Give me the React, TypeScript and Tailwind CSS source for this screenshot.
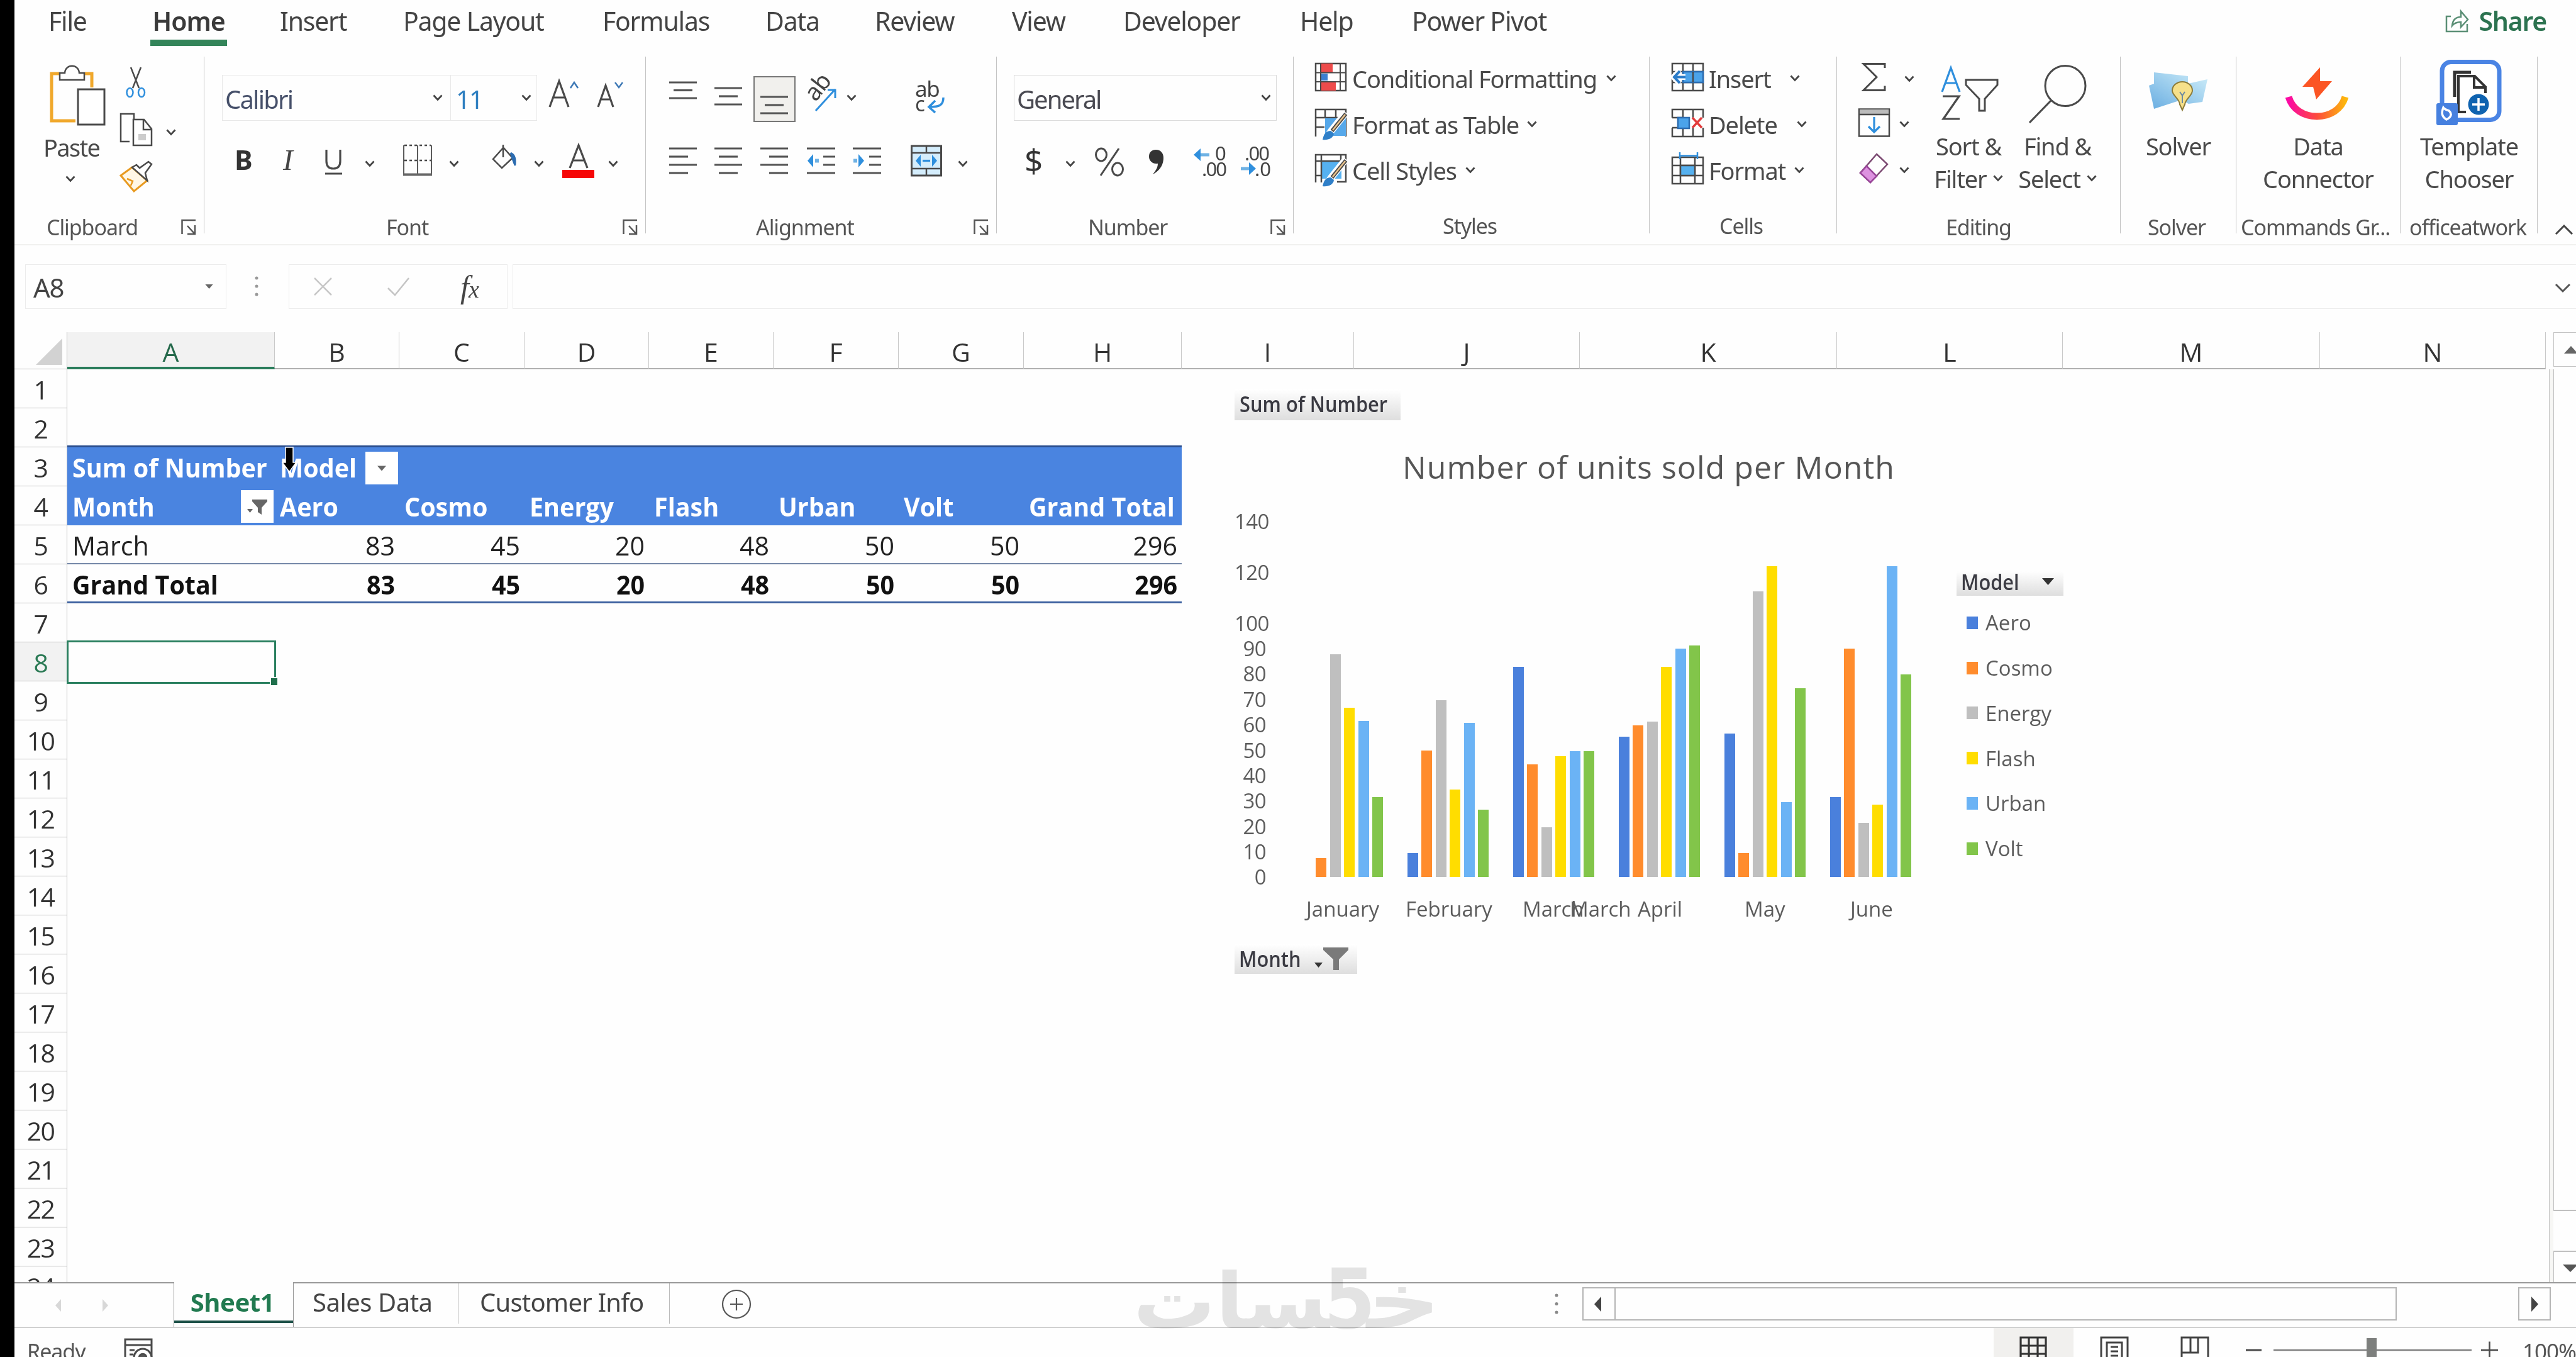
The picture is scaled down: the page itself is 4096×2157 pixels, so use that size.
import type { ReactNode } from "react";
import clsx from "clsx";

const INK = "#4a4a4a";
const BLUE = "#2f8fdd";

const tabs = [
  { label: "File", w: "w-[162px]" },
  { label: "Home", w: "w-[206px]", active: true },
  { label: "Insert", w: "w-[196px]" },
  { label: "Page Layout", w: "w-[317px]" },
  { label: "Formulas", w: "w-[259px]" },
  { label: "Data", w: "w-[174px]" },
  { label: "Review", w: "w-[218px]" },
  { label: "View", w: "w-[177px]" },
  { label: "Developer", w: "w-[281px]" },
  { label: "Help", w: "w-[178px]" },
  { label: "Power Pivot", w: "w-[260px]" },
];

const columns = [
  { id: "A", w: "w-[330px]" },
  { id: "B", w: "w-[198px]" },
  { id: "C", w: "w-[199px]" },
  { id: "D", w: "w-[198px]" },
  { id: "E", w: "w-[198px]" },
  { id: "F", w: "w-[199px]" },
  { id: "G", w: "w-[199px]" },
  { id: "H", w: "w-[251px]" },
  { id: "I", w: "w-[274px]" },
  { id: "J", w: "w-[359px]" },
  { id: "K", w: "w-[409px]" },
  { id: "L", w: "w-[359px]" },
  { id: "M", w: "w-[409px]" },
  { id: "N", w: "w-[359px]" },
];

const rows: Record<number, string[]> = {
  3: ["Sum of Number", "Model"],
  4: ["Month", "Aero", "Cosmo", "Energy", "Flash", "Urban", "Volt", "Grand Total"],
  5: ["March", "83", "45", "20", "48", "50", "50", "296"],
  6: ["Grand Total", "83", "45", "20", "48", "50", "50", "296"],
};

const series = [
  { name: "Aero", color: "bg-[#4a80dc]" },
  { name: "Cosmo", color: "bg-[#ff8c2d]" },
  { name: "Energy", color: "bg-[#bfbfbf]" },
  { name: "Flash", color: "bg-[#ffdd00]" },
  { name: "Urban", color: "bg-[#6bb3f5]" },
  { name: "Volt", color: "bg-[#82c54a]" },
];

const months = [
  [0, 7.5, 88, 67, 61.7, 31.7],
  [9.5, 50, 69.8, 34.5, 61, 26.5],
  [83, 44.5, 19.6, 47.7, 49.8, 49.8],
  [55.6, 60, 61.4, 83, 90.3, 91.6],
  [56.6, 9.5, 113, 123, 29.6, 74.7],
  [31.7, 90.3, 21.5, 28.7, 123, 80.2],
];

const PX_PER_UNIT = 4.02;

// Every icon is drawn in window coordinates; box = [x, y, width, height]
function Glyph({ box, children, className }: { box: number[]; children: ReactNode; className?: string }) {
  return (
    <svg
      width={box[2]}
      height={box[3]}
      viewBox={box.join(" ")}
      fill="none"
      stroke={INK}
      strokeWidth={2.5}
      className={clsx("shrink-0 overflow-visible", className)}
    >
      {children}
    </svg>
  );
}

function Chevron({ className }: { className?: string }) {
  return (
    <svg width="16" height="11" viewBox="0 0 16 11" fill="none" stroke="#444" strokeWidth="2.8" className={clsx("shrink-0", className)}>
      <path d="M1.5 1.5 8 8.5 14.5 1.5" />
    </svg>
  );
}

function Lines({ x, ys, w = 44, short = 30, align }: { x: number; ys: number[]; w?: number; short?: number; align: string }) {
  return (
    <>
      {ys.map((y, i) => {
        const len = i % 2 ? short : w;
        const off = align === "left" ? 0 : align === "right" ? w - len : (w - len) / 2;
        return <path key={y} d={`M${x + off} ${y}h${len}`} strokeWidth={3.2} stroke="#555" />;
      })}
    </>
  );
}

function Launcher() {
  return (
    <svg width="25" height="26" viewBox="0 0 25 26" fill="none" stroke="#555" strokeWidth="2.5" className="ml-auto mr-[11px] shrink-0">
      <path d="M1.5 24V2H23M10 11l11 12M22 10v14H10" />
    </svg>
  );
}

function Group({ w, label, pad, launcher, children }: { w: string; label: string; pad: string; launcher?: boolean; children: ReactNode }) {
  return (
    <section className={clsx("h-[281px] shrink-0 border-r border-[#c4c4c4]", w)}>
      <div className="h-[248px]">{children}</div>
      <div className={clsx("flex h-[46px] items-center whitespace-nowrap text-[34px] leading-[46px] tracking-[-0.032em] text-[#555]", pad)}>
        {label}
        {launcher && <Launcher />}
      </div>
    </section>
  );
}

function BigButton({ w, icon, lines, chevron }: { w: string; icon: ReactNode; lines: string[]; chevron?: boolean }) {
  return (
    <div className={clsx("flex shrink-0 flex-col items-center pt-[5px]", w)}>
      {icon}
      <div className="mt-[6px] whitespace-nowrap text-center text-[38px] leading-[52px] tracking-[-0.03em] text-[#4a4a4a]">
        {lines.map((l, i) => (
          <div key={l} className="flex items-center justify-center">
            {l}
            {chevron && i === lines.length - 1 && <Chevron className="-mt-0.5 ml-2.5" />}
          </div>
        ))}
      </div>
    </div>
  );
}

function ClipboardGroup() {
  return (
    <Group w="w-[302px]" label="Clipboard" pad="pl-[51px]" launcher>
      <div className="flex">
        <div className="w-[167px] pl-[46px]">
          <Glyph box={[78, 103, 90, 98]} className="ml-[10px] mt-[13px]">
            <path d="M93 117H81v75h38M134 117h11v22" stroke="#f0a82c" strokeWidth={5} />
            <path d="M94 127V116h8c1-15 22-15 23 0h8v11z" fill="#fff" />
            <rect x="123" y="142" width="42" height="56" fill="#fff" strokeWidth={3} />
          </Glyph>
          <div className="mt-[8px] text-[38px] leading-[50px] tracking-[-0.045em] text-[#4a4a4a]">Paste</div>
          <Chevron className="ml-[35px] mt-5" />
        </div>
        <div>
          <Glyph box={[200, 106, 32, 50]} className="ml-2.5 mt-4">
            <path d="M208 107l13 33M224 107l-13 33" />
            <ellipse cx="206.500" cy="147" rx="5" ry="7" stroke={BLUE} />
            <ellipse cx="225" cy="147" rx="5" ry="7" stroke={BLUE} />
          </Glyph>
          <div className="mt-[23px] flex items-center">
            <Glyph box={[189, 179, 54, 54]}>
              <path d="M205 225h-14v-44h21v8" />
              <path d="M211 190h17l12 15v26h-29zM227 190v16h13" fill="#fff" />
              <rect x="219" y="213" width="12" height="10" fill="#ccc" stroke="none" />
            </Glyph>
            <Chevron className="ml-5 mt-2" />
          </div>
          <Glyph box={[190, 256, 53, 50]} className="mt-[23px]">
            <path d="M192 279l18-13 24 21-21 17z" fill="#fff7e6" stroke="#e89a20" strokeWidth={3} />
            <path d="M202 284l9 4-3 7" stroke="#e89a20" />
            <path d="M210 266l7-4 5 5 14-10 5 4-10 14 3 12z" fill="#fff" />
          </Glyph>
        </div>
      </div>
    </Group>
  );
}

function FontGroup() {
  return (
    <Group w="w-[702px]" label="Font" pad="pl-[289px]" launcher>
      <div className="pl-[28px] pt-[29px]">
        <div className="flex h-[73px] items-center text-[40px] tracking-[-0.045em] text-[#4a4a4a]">
          <div className="flex h-full w-[364px] items-center border border-[#e8e8e8] pl-1">
            <span className="mt-1 text-[#46506a]">Calibri</span>
            <Chevron className="ml-auto mr-3" />
          </div>
          <div className="flex h-full w-[137px] items-center border border-l-0 border-[#e8e8e8] pl-2">
            <span className="mt-1 text-[#2f7fc0]">11</span>
            <Chevron className="ml-auto mr-2" />
          </div>
          <Glyph box={[872, 119, 50, 73]} className="ml-[18px]">
            <path d="M874 170l15-41 15 41M879 155h20" strokeWidth={3.2} />
            <path d="M907 140l6-9 6 9" stroke="#3d78b5" />
          </Glyph>
          <Glyph box={[948, 119, 44, 73]} className="ml-[26px]">
            <path d="M951 170l12-34 12 34M955 158h16" strokeWidth={3.2} />
            <path d="M978 131l6 8 6-8" stroke="#3d78b5" />
          </Glyph>
        </div>
        <div className="mt-[29px] flex h-[73px] items-center">
          <Glyph box={[372, 221, 30, 73]} className="ml-[19px]">
            <text x="373" y="270" fontSize="43" fontWeight="700" fill="#333" stroke="none">B</text>
          </Glyph>
          <Glyph box={[446, 221, 26, 73]} className="ml-11">
            <text x="450" y="270" fontSize="47" fontStyle="italic" fill="#444" stroke="none" className="font-[Liberation_Serif]">I</text>
          </Glyph>
          <Glyph box={[515, 221, 32, 73]} className="ml-[43px]">
            <path d="M519 238v18q0 12 11 12t11-12v-18" strokeWidth={3.2} />
            <path d="M517 276h27" strokeWidth={3} />
          </Glyph>
          <Chevron className="ml-[33px] mt-1.5" />
          <Glyph box={[640, 221, 48, 73]} className="ml-11">
            <path d="M643 231h42M643 255h42" strokeDasharray="4 4" />
            <path d="M642 231v47M686 231v47M664 231v47" strokeWidth={1.8} />
            <path d="M641 277.500h46" strokeWidth={4} stroke="#666" />
          </Glyph>
          <Chevron className="ml-[26px] mt-1.5" />
          <Glyph box={[780, 221, 42, 73]} className="ml-[50px]">
            <path d="M800 235l-16 18 14 14 17-16-16-18M800 230v20" />
            <path d="M812 243c7 3 8 10 7 20-3-7-5-12-7-20" fill="#2c6cb0" stroke="#2c6cb0" />
          </Glyph>
          <Chevron className="ml-[27px] mt-1.5" />
          <Glyph box={[893, 221, 53, 73]} className="ml-7">
            <path d="M906 267l14-36 14 36M911 255h18" strokeWidth={3.2} />
            <rect x="894" y="270" width="51" height="13" fill="#f60606" stroke="none" />
          </Glyph>
          <Chevron className="ml-[21px] mt-1.5" />
        </div>
      </div>
    </Group>
  );
}

function AlignmentGroup() {
  const ys = [236, 249, 262, 275];
  return (
    <Group w="w-[558px]" label="Alignment" pad="pl-[175px]" launcher>
      <div className="pl-[37px] pt-[29px]">
        <div className="flex h-[73px] items-center">
          <Glyph box={[1064, 119, 45, 73]}>
            <Lines x={1064} ys={[131, 143.5, 156]} align="center" />
          </Glyph>
          <Glyph box={[1136, 119, 45, 73]} className="ml-[27px]">
            <Lines x={1136} ys={[140, 153, 166]} align="center" />
          </Glyph>
          <div className="ml-[17px] mt-1 flex h-[73px] w-[67px] items-center justify-center border-2 border-[#777] bg-[#f1f0ed]">
            <Glyph box={[1210, 120, 45, 73]}>
              <Lines x={1210} ys={[153, 166, 179]} align="center" />
            </Glyph>
          </div>
          <Glyph box={[1280, 119, 52, 73]} className="ml-[15px]">
            <text x="0" y="0" fontSize="38" fill="#444" stroke="none" transform="translate(1297 163) rotate(-52)" className="tracking-[-0.03em]">ab</text>
            <path d="M1297 176l31-34M1316 143h12v13" stroke={BLUE} strokeWidth={3} />
          </Glyph>
          <Chevron className="ml-[14px]" />
          <Glyph box={[1454, 119, 50, 73]} className="ml-[93px]">
            <text x="1454" y="154" fontSize="35" fill="#444" stroke="none" className="tracking-[-0.04em]">ab</text>
            <text x="1454" y="177" fontSize="33" fill="#444" stroke="none">c</text>
            <path d="M1499 155c0 12-6 15-22 15M1486 160l-10 10 10 9" stroke={BLUE} strokeWidth={3.5} />
          </Glyph>
        </div>
        <div className="mt-[29px] flex h-[73px] items-center">
          <Glyph box={[1064, 221, 45, 73]}>
            <Lines x={1064} ys={ys} align="left" />
          </Glyph>
          <Glyph box={[1136, 221, 45, 73]} className="ml-[27px]">
            <Lines x={1136} ys={ys} align="center" />
          </Glyph>
          <Glyph box={[1208, 221, 46, 73]} className="ml-[27px]">
            <Lines x={1209} ys={ys} align="right" />
          </Glyph>
          <Glyph box={[1282, 221, 47, 73]} className="ml-7">
            <path d="M1283 236h45M1309 249h19M1309 262h19M1283 275h45" stroke="#555" strokeWidth={3.2} />
            <path d="M1302 255.500h-6" stroke="#6fb2e4" strokeWidth={6} />
            <path d="M1293 245v21l-9-10.500z" fill={BLUE} stroke="none" />
          </Glyph>
          <Glyph box={[1355, 221, 47, 73]} className="ml-[26px]">
            <path d="M1356 236h45M1382 249h19M1382 262h19M1356 275h45" stroke="#555" strokeWidth={3.2} />
            <path d="M1357 255.500h6" stroke="#6fb2e4" strokeWidth={6} />
            <path d="M1365 245v21l9-10.500z" fill={BLUE} stroke="none" />
          </Glyph>
          <Glyph box={[1447, 221, 52, 73]} className="ml-[45px]">
            <rect x="1449.500" y="232" width="47" height="47" fill="#d4edfc" strokeWidth={3} />
            <path d="M1473 232v11M1473 268v11M1450 243h46M1450 268h46" />
            <path d="M1467 255.500h12" stroke={BLUE} strokeWidth={3.2} />
            <path d="M1464 246v19l-8-9.500zM1482 246v19l8-9.500z" fill={BLUE} stroke="none" />
          </Glyph>
          <Chevron className="ml-6 mt-1.5" />
        </div>
      </div>
    </Group>
  );
}

function NumberGroup() {
  return (
    <Group w="w-[472px]" label="Number" pad="pl-[145px]" launcher>
      <div className="pl-[27px] pt-[29px]">
        <div className="flex h-[73px] w-[418px] items-center border border-[#dcdcdc] pl-1 text-[40px] tracking-[-0.05em] text-[#4a4a52]">
          <span className="mt-1">General</span>
          <Chevron className="ml-auto mr-2" />
        </div>
        <div className="mt-[29px] flex h-[73px] items-center">
          <Glyph box={[1628, 221, 30, 73]} className="ml-4">
            <text x="1629" y="275" fontSize="51" fill="#333" stroke="none">$</text>
          </Glyph>
          <Chevron className="ml-9 mt-1.5" />
          <Glyph box={[1740, 221, 50, 73]} className="ml-[30px]">
            <ellipse cx="1751" cy="246" rx="8.500" ry="10" strokeWidth={3} />
            <ellipse cx="1777" cy="269" rx="8.500" ry="10" strokeWidth={3} />
            <path d="M1779 236l-29 43" strokeWidth={3} />
          </Glyph>
          <Glyph box={[1824, 221, 30, 73]} className="ml-[34px]">
            <path d="M1838 238c8 0 12 6 12 13 0 12-7 21-17 26 5-6 8-11 8-17-8 1-14-4-14-11s4-11 11-11z" fill="#333" stroke="none" />
          </Glyph>
          <Glyph box={[1895, 221, 56, 73]} className="ml-[41px]">
            <text x="1932" y="255" fontSize="31" fill="#444" stroke="none">0</text>
            <text x="1911" y="280" fontSize="31" fill="#444" stroke="none" className="tracking-[-0.06em]">.00</text>
            <path d="M1923 246h-14" stroke="#6fb2e4" strokeWidth={5} />
            <path d="M1909 236v20l-11-10z" fill={BLUE} stroke="none" />
          </Glyph>
          <Glyph box={[1969, 221, 54, 73]} className="ml-[18px]">
            <text x="1979" y="255" fontSize="31" fill="#444" stroke="none" className="tracking-[-0.06em]">.00</text>
            <text x="1995" y="280" fontSize="31" fill="#444" stroke="none">.0</text>
            <path d="M1973 268h13" stroke="#6fb2e4" strokeWidth={5} />
            <path d="M1986 258v20l11-10z" fill={BLUE} stroke="none" />
          </Glyph>
        </div>
      </div>
    </Group>
  );
}

function MenuRow({ icon, label, gap }: { icon: ReactNode; label: string; gap: string }) {
  return (
    <div className="flex h-[73px] items-center whitespace-nowrap text-[38px] tracking-[-0.03em] text-[#4a4a4a]">
      {icon}
      <span className="mt-0.5">{label}</span>
      <Chevron className={gap} />
    </div>
  );
}

function Brush({ y }: { y: number }) {
  return (
    <>
      <path d={`M2140 ${y}l-24 30-9 14`} stroke="#fff" strokeWidth={11} />
      <path d={`M2140 ${y + 2}l-22 27`} stroke={INK} strokeWidth={6} />
      <path d={`M2139 ${y + 3}l-20 25`} stroke="#ecc48c" strokeWidth={2.5} />
      <path d={`M2116 ${y + 29}c-8 0-11 5-13 14 9 1 17-2 18-10z`} fill="#2f7fc8" stroke="none" />
    </>
  );
}

function StylesGroup() {
  return (
    <Group w="w-[566px]" label="Styles" pad="pl-[237px]">
      <div className="-mt-0.5 pl-[33px]">
        <MenuRow
          label="Conditional Formatting"
          gap="ml-[15px]"
          icon={
            <Glyph box={[2090, 88, 53, 73]} className="mr-[7px]">
              <rect x="2092" y="101" width="48" height="43" fill="#fff" />
              <rect x="2100" y="101" width="19" height="14" fill="#ee4b4b" stroke="none" />
              <rect x="2100" y="130" width="24" height="14" fill="#ee4b4b" stroke="none" />
              <rect x="2100" y="117" width="11" height="11" fill="#3c7fd0" stroke="none" />
              <path d="M2092 115.500h48M2092 130h48M2100 101v43M2131 101v43" strokeWidth={2} />
            </Glyph>
          }
        />
        <MenuRow
          label="Format as Table"
          gap="ml-[13px]"
          icon={
            <Glyph box={[2090, 161, 53, 73]} className="mr-[7px]">
              <path d="M2092 217v-43h48v43M2092 187h48M2092 202h14M2107 174v13M2124 174v13" />
              <rect x="2107" y="188" width="33" height="28" fill="#56a8ea" stroke="none" />
              <Brush y={179} />
            </Glyph>
          }
        />
        <MenuRow
          label="Cell Styles"
          gap="ml-[14px]"
          icon={
            <Glyph box={[2090, 234, 53, 73]} className="mr-[7px]">
              <rect x="2101" y="257" width="32" height="27" fill="#56b1f0" stroke="none" />
              <path d="M2092 290v-44h48v43h-14M2092 256h48M2101 246v44M2092 279h9M2132 246v10" />
              <Brush y={253} />
            </Glyph>
          }
        />
      </div>
    </Group>
  );
}

function CellsGroup() {
  return (
    <Group w="w-[298px]" label="Cells" pad="pl-[111px]">
      <div className="-mt-0.5 pl-[34px]">
        <MenuRow
          label="Insert"
          gap="ml-[30px]"
          icon={
            <Glyph box={[2657, 88, 53, 73]} className="mr-[7px]">
              <path d="M2659 101h49v43h-49zM2676 101v43M2692 101v43M2659 114h49M2659 131h49" />
              <rect x="2676" y="114" width="32" height="17" fill="#4ba3ea" stroke="#2c6cb0" />
              <path d="M2692 114v17" />
              <path d="M2680 122.500h-18M2671 112l-10 10.500 10 10.500" stroke="#fff" strokeWidth={9} />
              <path d="M2680 122.500h-18M2671 113l-9 9.500 9 9.500" stroke="#2c7cc8" strokeWidth={4} />
            </Glyph>
          }
        />
        <MenuRow
          label="Delete"
          gap="ml-[31px]"
          icon={
            <Glyph box={[2657, 161, 53, 73]} className="mr-[7px]">
              <path d="M2659 187v-13h49v13M2659 203v14h49v-14M2676 174v13M2692 174v13M2676 203v14M2692 203v14M2659 187h17M2659 203h17" />
              <rect x="2668" y="187" width="18" height="17" fill="#4ba3ea" stroke="#2c6cb0" />
              <path d="M2691 187l15 16M2706 187l-15 16" stroke="#e23c3c" strokeWidth={3.5} />
            </Glyph>
          }
        />
        <MenuRow
          label="Format"
          gap="ml-[14px]"
          icon={
            <Glyph box={[2657, 234, 53, 73]} className="mr-[7px]">
              <path d="M2659 250h49v42h-49zM2672 250v42M2695 250v42M2659 263h49M2659 279h49" />
              <rect x="2672" y="263" width="23" height="16" fill="#56b1f0" />
              <path d="M2671 242v11M2699 242v11M2671 247.500h28" stroke={BLUE} />
            </Glyph>
          }
        />
      </div>
    </Group>
  );
}

function EditingGroup() {
  return (
    <Group w="w-[451px]" label="Editing" pad="pl-[173px]">
      <div className="flex">
        <div className="-mt-0.5 w-[150px] pl-8">
          <div className="flex h-[73px] items-center">
            <Glyph box={[2953, 88, 54, 73]}>
              <path d="M2997 108v-6.500h-34l21 21-21 21h34v-7" strokeWidth={3} />
            </Glyph>
            <Chevron className="ml-[21px] mt-0.5" />
          </div>
          <div className="flex h-[73px] items-center">
            <Glyph box={[2953, 161, 54, 73]}>
              <rect x="2956" y="173.500" width="48" height="43" />
              <rect x="2957" y="174" width="46" height="7" fill="#bbb" stroke="none" />
              <path d="M2956 182h48" />
              <path d="M2980 186v23M2971 201l9 9 9-9" stroke={BLUE} strokeWidth={3.2} />
            </Glyph>
            <Chevron className="ml-[13px]" />
          </div>
          <div className="flex h-[73px] items-center">
            <Glyph box={[2953, 234, 54, 73]}>
              <path d="M2984 245l17 16-27 29-16-15z" stroke="#7c4a72" />
              <path d="M2968 264l16 16-10 10-16-15z" fill="#dd92e0" stroke="#9b479b" />
            </Glyph>
            <Chevron className="ml-[13px]" />
          </div>
        </div>
        <BigButton
          w="w-[118px]"
          lines={["Sort &", "Filter"]}
          chevron
          icon={
            <Glyph box={[3084, 95, 96, 105]} className="ml-1">
              <path d="M3088 146l14-38 14 38M3093 132h18" stroke={BLUE} strokeWidth={3.2} />
              <path d="M3089 153h26l-25 36h26" strokeWidth={3.2} />
              <path d="M3126 127h50v8l-20 22v19h-9v-19l-21-22z" strokeWidth={3} />
            </Glyph>
          }
        />
        <BigButton
          w="w-[165px]"
          lines={["Find &", "Select"]}
          chevron
          icon={
            <Glyph box={[3224, 95, 96, 105]}>
              <circle cx="3284" cy="136.500" r="32" strokeWidth={3} />
              <path d="M3261 160l-34 35" strokeWidth={3.2} />
            </Glyph>
          }
        />
      </div>
    </Group>
  );
}

function AddInGroups() {
  return (
    <>
      <Group w="w-[184px]" label="Solver" pad="pl-[43px]">
        <BigButton
          w="w-[183px]"
          lines={["Solver"]}
          icon={
            <Glyph box={[3414, 95, 100, 105]}>
              <defs>
                <linearGradient id="sky" x1="0" y1="1" x2="1" y2="0">
                  <stop offset="0" stopColor="#4f9fdc" />
                  <stop offset="1" stopColor="#c8ecf9" />
                </linearGradient>
              </defs>
              <path d="M3425 115l54 6v12l31-7-8 36-22 3-12-6-43 14-8-37 8-3z" fill="url(#sky)" stroke="none" opacity={0.85} />
              <path d="M3466 166c0-9-12-14-12-22a16 14 0 0 1 32 0c0 8-11 13-12 22l-4 9z" fill="#f6e08a" stroke="#8d7c3a" strokeWidth={2} />
              <path d="M3466 146l4 6 4-6M3470 152v12" stroke="#6c8aa0" strokeWidth={2} />
            </Glyph>
          }
        />
      </Group>
      <Group w="w-[261px]" label="Commands Gr..." pad="pl-[7px]">
        <BigButton
          w="w-[260px]"
          lines={["Data", "Connector"]}
          icon={
            <Glyph box={[3634, 95, 102, 105]} className="-ml-1">
              <defs>
                <linearGradient id="smile" x1="0" y1="0" x2="1" y2="0">
                  <stop offset="0" stopColor="#fb0aa4" />
                  <stop offset="0.5" stopColor="#fd4b3c" />
                  <stop offset="1" stopColor="#fdb60d" />
                </linearGradient>
              </defs>
              <path d="M3640 154c6 20 24 31 45 31s39-11 45-31" stroke="url(#smile)" strokeWidth={11} />
              <path d="M3690 107l-28 31h17l5 20 25-29h-19z" fill="#fb5524" stroke="none" />
            </Glyph>
          }
        />
      </Group>
      <Group w="w-[218px]" label="officeatwork" pad="pl-[14px]">
        <BigButton
          w="w-[218px]"
          lines={["Template", "Chooser"]}
          icon={
            <Glyph box={[3872, 95, 107, 105]}>
              <rect x="3882" y="98.500" width="91" height="92" rx="14" stroke="#4a84e4" strokeWidth={7} fill="#fff" />
              <path d="M3902 154v-39h26" stroke="#333" strokeWidth={5} />
              <path d="M3920 178h-12v-57h26l17 17v10M3933 121v18h18" stroke="#333" strokeWidth={4} />
              <rect x="3873" y="164" width="34" height="35" rx="3" fill="#4680df" stroke="none" />
              <path d="M3884 171c-3 8-3 14 5 19 8-4 9-9 4-14-3-1-7-2-9-5z" stroke="#fff" strokeWidth={3.5} />
              <circle cx="3940" cy="166" r="16.500" fill="#0f63b0" stroke="none" />
              <path d="M3940 156v20M3930 166h20" stroke="#fff" strokeWidth={3.5} />
            </Glyph>
          }
        />
      </Group>
    </>
  );
}

function FormulaBar() {
  return (
    <div className="flex h-[138px] pl-[17px] pt-[30px]">
      <div className="flex h-[71px] w-[320px] items-center border border-[#ececec] pl-3 text-[42px] tracking-[-0.03em] text-[#444]">
        <span className="mt-0.5">A8</span>
        <svg width="13" height="7" viewBox="0 0 14 8" className="ml-auto mr-5">
          <path d="M0 0h14L7 8z" fill="#666" />
        </svg>
      </div>
      <svg width="10" height="71" viewBox="0 0 10 71" fill="#999" className="ml-[43px]">
        <circle cx="5" cy="22" r="2.500" />
        <circle cx="5" cy="35" r="2.500" />
        <circle cx="5" cy="48" r="2.500" />
      </svg>
      <div className="ml-[46px] flex h-[71px] w-[348px] items-center border border-[#ececec]">
        <Glyph box={[500, 420, 30, 71]} className="ml-[39px]">
          <path d="M501 442l27 27M528 442l-27 27" stroke="#c8c8c8" />
        </Glyph>
        <Glyph box={[616, 420, 38, 71]} className="ml-[86px]">
          <path d="M618 458l11 11 22-27" stroke="#c4c4c4" />
        </Glyph>
        <span className="ml-[79px] font-['Liberation_Serif'] text-[50px] italic leading-none tracking-[-0.02em] text-[#444]">
          f<span className="text-[38px]">x</span>
        </span>
      </div>
      <div className="ml-2 flex h-[71px] flex-1 items-center border border-r-0 border-[#ececec]">
        <svg width="26" height="16" viewBox="0 0 26 16" fill="none" stroke="#555" strokeWidth="3" className="ml-auto mr-2 mt-1">
          <path d="M2 2l11 11L24 2" />
        </svg>
      </div>
    </div>
  );
}

function ColumnHeaders() {
  return (
    <div className="flex h-[59px]">
      <div className="flex w-[84px] shrink-0 justify-end border-r border-b border-[#bdbdbd] pr-[7px] pt-2.5">
        <svg width="42" height="42" viewBox="0 0 42 42">
          <path d="M42 0v42H0z" fill="#d2d2d2" />
        </svg>
      </div>
      {columns.map((c) => (
        <div
          key={c.id}
          className={clsx(
            "shrink-0 border-r text-center text-[41px] leading-[62px]",
            c.w,
            c.id === "A" ? "border-b-4 border-r-[#c9c9c9] border-b-[#2a7d5b] bg-[#f2f2f2] text-[#25694b]" : "border-b-2 border-r-[#c9c9c9] border-b-[#b0b0b0] text-[#333]",
          )}
        >
          {c.id}
        </div>
      ))}
      <div className="flex-1 pl-[12px]">
        <div className="flex h-[55px] items-center overflow-hidden border border-r-0 border-[#c4c4c4] pl-4">
          <svg width="22" height="12" viewBox="0 0 22 12" className="shrink-0">
            <path d="M11 0l11 12H0z" fill="#666" />
          </svg>
        </div>
      </div>
    </div>
  );
}

function Row({ n }: { n: number }) {
  const cells = rows[n] ?? [];
  const header = n === 3 || n === 4;
  return (
    <div className="flex h-[62px]">
      <div
        className={clsx(
          "w-[84px] border-r border-b border-[#bdbdbd] text-center text-[41px] leading-[65px] tracking-[-0.04em]",
          n === 8 ? "bg-[#f2f2f2] text-[#2b7a55]" : "text-[#333]",
        )}
      >
        {n}
      </div>
      {cells.length > 0 && (
        <div
          className={clsx(
            "flex text-[42px] leading-[64px]",
            header && "bg-[#4a84e0] font-bold text-white",
            n === 3 && "-mt-[3px] w-[1772px] border-t-[3px] border-[#2c4f8f]",
            n === 4 && "w-[1772px]",
            n === 5 && "border-b-2 border-[#7488a8] text-[#222]",
            n === 6 && "border-b-[3px] border-[#3f62a0] font-bold text-[#111]",
          )}
        >
          {cells.map((text, i) => {
            const numeric = !header && i > 0;
            return (
              <div key={i} className={clsx("flex shrink-0 items-start whitespace-nowrap", columns[i].w, numeric ? "justify-end pr-[7px]" : "pl-[8px]")}>
                <span
                  className={clsx(
                    "inline-block",
                    numeric ? "origin-right" : "origin-left",
                    n === 5 ? "scale-x-[0.98]" : "scale-x-[0.94]",
                  )}
                >
                  {text}
                </span>
                {text === "Model" && (
                  <div className="ml-auto mr-[2px] mt-[7px] flex h-[52px] w-[52px] items-center justify-center bg-white">
                    <svg width="14" height="9" viewBox="0 0 16 9">
                      <path d="M0 0h16L8 9z" fill="#666" />
                    </svg>
                  </div>
                )}
                {text === "Month" && (
                  <div className="ml-auto mr-[2px] mt-[6px] flex h-[52px] w-[52px] items-center justify-center bg-white">
                    <svg width="32" height="26" viewBox="0 0 32 26" fill="#666">
                      <path d="M8 2h24v3l-9 10v11l-6-4v-7L8 5zM0 17h9l-4.500 6z" />
                    </svg>
                  </div>
                )}
              </div>
            );
          })}
        </div>
      )}
    </div>
  );
}

function FieldButton({ label, className, children }: { label: string; className?: string; children?: ReactNode }) {
  return (
    <div className={clsx("flex items-center bg-linear-to-b from-white to-[#dedede] text-[35px] font-semibold leading-none text-[#3a3a42]", className)}>
      <span className="inline-block origin-left scale-x-[0.88] whitespace-nowrap">{label}</span>
      {children}
    </div>
  );
}

function PivotChart() {
  const ticks = [140, 130, 120, 110, 100, 90, 80, 70, 60, 50, 40, 30, 20, 10, 0];
  return (
    <div className="absolute left-[1940px] top-[32px] w-[1330px] text-[33px] text-[#5c5c5c]">
      <FieldButton label="Sum of Number" className="h-[49px] w-[264px] pb-1 pl-[8px]" />
      <div className="mt-[42px] pl-[267px] text-[50px] leading-[64px] tracking-[0.021em] whitespace-nowrap text-[#555]">Number of units sold per Month</div>
      <div className="mt-[35px] flex h-[606px]">
        <div className="w-[50px] text-right tracking-[-0.02em]">
          {ticks.map((t) => (
            <div key={t} className="h-[40.400px] leading-[40px]">
              {t === 130 || t === 110 ? "" : t}
            </div>
          ))}
        </div>
        <div className="ml-[57px] flex h-[585px] w-[1008px] items-end">
          {months.map((values, m) => (
            <div key={m} className="flex w-[168px] shrink-0 items-end gap-[5.400px]">
              {values.map((v, i) => (
                <div key={i} className={clsx("w-[17px]", series[i].color)} style={{ height: v * PX_PER_UNIT }} />
              ))}
            </div>
          ))}
        </div>
        <div className="ml-[33px] mt-[98px] w-[180px] shrink-0">
          <FieldButton label="Model" className="h-[40px] w-[170px] pb-1.5 pl-[7px]">
            <svg width="19" height="11" viewBox="0 0 19 11" className="ml-auto mr-[15px]">
              <path d="M0 0h19L9.500 11z" fill="#333" />
            </svg>
          </FieldButton>
          <div className="mt-[7px]">
            {series.map((s) => (
              <div key={s.name} className="flex h-[71.800px] items-center pl-[16px]">
                <span className={clsx("mr-[12px] h-[20px] w-[18px]", s.color)} />
                {s.name}
              </div>
            ))}
          </div>
        </div>
      </div>
      <div className="mt-[6px] flex h-[48px] items-center whitespace-nowrap leading-[48px]">
        <span className="ml-[114px] w-[158px]">January</span>
        <span className="w-[186px]">February</span>
        <span className="w-[75px]">March</span>
        <span className="w-[108px]">March</span>
        <span className="w-[170px]">April</span>
        <span className="w-[168px]">May</span>
        <span>June</span>
      </div>
      <FieldButton label="Month" className="mt-[32px] h-[47px] w-[195px] pb-0.5 pl-[7px]">
        <svg width="54" height="38" viewBox="0 0 54 38" className="ml-auto mr-[14px]">
          <path d="M0 25h13l-6.500 8z" fill="#333" />
          <path d="M14 1h40v4L39 20v17h-9V20L14 5z" fill="#7a7a7a" />
        </svg>
      </FieldButton>
    </div>
  );
}

function Sheet() {
  return (
    <div className="relative flex h-[1451px] overflow-hidden">
      <div className="w-[4031px] shrink-0 border-r border-[#c0c0c0]">
        {Array.from({ length: 24 }, (_, i) => (
          <Row key={i} n={i + 1} />
        ))}
      </div>
      <div className="flex flex-1 flex-col bg-[#f7f7f5] pl-[6px]">
        <div className="h-[1338px] border-b-2 border-l border-[#c0c0c0] bg-[#fefefe]" />
        <div className="h-[63px] bg-[#fefefe]" />
        <div className="flex flex-1 items-start overflow-hidden border-l border-t-2 border-[#c0c0c0] bg-[#fefefe] pl-3.5 pt-[20px]">
          <svg width="24" height="12" viewBox="0 0 24 12" className="shrink-0">
            <path d="M0 0h24L12 12z" fill="#555" />
          </svg>
        </div>
      </div>

      {/* selected cell A8 */}
      <div className="absolute left-[83px] top-[431px] h-[69px] w-[333px] border-[3px] border-[#2b8060]">
        <div className="absolute -bottom-[5px] -right-[5px] h-[13px] w-[12px] border-l-2 border-t-2 border-white bg-[#1f6f4c]" />
      </div>

      {/* column-select pointer */}
      <svg width="26" height="42" viewBox="0 0 24 42" className="absolute left-[424px] top-[123px]">
        <path d="M6 1h12v24h5L12 40 1 25h5z" fill="#000" stroke="#fff" strokeWidth="1.500" />
      </svg>

      <PivotChart />
    </div>
  );
}

function SheetTabs() {
  return (
    <div className="flex h-[73px] border-b-2 border-[#d0d0d0] text-[40px] leading-[64px] tracking-[-0.02em] text-[#444]">
      <div className="flex w-[254px] shrink-0 items-center gap-[66px] border-r border-t-2 border-[#999] pl-[65px]">
        <svg width="9" height="20" viewBox="0 0 9 20">
          <path d="M9 0v20L0 10z" fill="#d8d8d8" />
        </svg>
        <svg width="9" height="20" viewBox="0 0 9 20">
          <path d="M0 0v20l9-10z" fill="#d8d8d8" />
        </svg>
      </div>
      <div className="h-[65px] w-[189px] shrink-0 border-b-4 border-[#1d5148] pr-1 text-center font-bold leading-[64px] tracking-[-0.01em] text-[#217a50]">Sheet1</div>
      <div className="flex flex-1 border-l border-t-2 border-[#999]">
        <div className="h-[64px] w-[262px] shrink-0 border-r border-[#bbb] pl-[30px] leading-[60px] tracking-[-0.012em]">Sales Data</div>
        <div className="h-[64px] w-[336px] shrink-0 border-r border-[#bbb] pl-[34px] leading-[60px]">Customer Info</div>
        <svg width="48" height="48" viewBox="0 0 48 48" fill="none" stroke="#555" strokeWidth="2.200" className="ml-[82px] mt-[9px]">
          <circle cx="24" cy="24" r="22" />
          <path d="M24 14v20M14 24h20" />
        </svg>
        <svg width="8" height="60" viewBox="0 0 8 60" fill="#888" className="ml-auto mt-0.5">
          <circle cx="4" cy="17" r="2.500" />
          <circle cx="4" cy="30.500" r="2.500" />
          <circle cx="4" cy="44" r="2.500" />
        </svg>
        <div className="ml-[37px] mt-[6px] flex h-[53px] w-[53px] items-center justify-center border-2 border-[#b5b5b5]">
          <svg width="11" height="24" viewBox="0 0 11 24" className="-ml-1">
            <path d="M11 0v24L0 12z" fill="#444" />
          </svg>
        </div>
        <div className="-ml-0.5 mt-[6px] h-[53px] w-[1244px] border-2 border-[#b5b5b5]" />
        <div className="ml-[193px] mr-10 mt-[6px] flex h-[53px] w-[52px] items-center justify-center border-2 border-[#b5b5b5]">
          <svg width="11" height="24" viewBox="0 0 11 24">
            <path d="M0 0v24l11-12z" fill="#444" />
          </svg>
        </div>
      </div>
    </div>
  );
}

function StatusBar() {
  return (
    <div className="flex h-[46px] overflow-hidden">
      <div className="w-[173px] shrink-0 pl-[20px] pt-[12px] text-[34px] leading-[50px] tracking-[-0.03em] whitespace-nowrap text-[#555]">Ready</div>
      <Glyph box={[196, 2111, 48, 46]}>
        <path d="M199 2160v-31h42v31M199 2138h42M206 2146h8M206 2153h6" strokeWidth={3} />
        <circle cx="227" cy="2158" r="14" fill="#fff" strokeWidth={3} />
        <circle cx="227" cy="2158" r="6" fill="#555" />
      </Glyph>
      <div className="ml-auto flex h-full w-[127px] justify-center bg-[#f1f0ee]">
        <Glyph box={[3213, 2111, 44, 46]}>
          <path d="M3214 2160v-34h40v34M3227 2126v34M3241 2126v34M3214 2139h40M3214 2152h40" stroke="#333" strokeWidth={3.2} />
        </Glyph>
      </div>
      <Glyph box={[3338, 2111, 48, 46]} className="ml-[41px]">
        <path d="M3341 2160v-34h42v34M3350 2160v-26h24v26M3356 2141h12M3356 2148h12M3356 2155h12" stroke="#444" strokeWidth={3} />
      </Glyph>
      <Glyph box={[3466, 2111, 48, 46]} className="ml-[80px]">
        <path d="M3469 2160v-34h42v34M3483 2126v24M3495 2126v24h-26" stroke="#444" strokeWidth={3} />
      </Glyph>
      <Glyph box={[3570, 2111, 28, 46]} className="ml-[56px]">
        <path d="M3571 2146h25" strokeWidth={3} />
      </Glyph>
      <Glyph box={[3614, 2111, 318, 46]} className="ml-4">
        <path d="M3615 2146h315" stroke="#808080" strokeWidth={2.5} />
        <rect x="3763" y="2127" width="16" height="34" fill="#7d7f7d" stroke="none" />
      </Glyph>
      <Glyph box={[3944, 2111, 29, 46]} className="ml-3">
        <path d="M3945 2146h27M3958.500 2132.500v27" />
      </Glyph>
      <div className="ml-[38px] w-[85px] pt-[11px] text-[35px] leading-[52px] tracking-[-0.03em] whitespace-nowrap text-[#555]">100%</div>
    </div>
  );
}

// خمسات with the meem written as a 5
function Watermark() {
  return (
    <svg
      width="500"
      height="110"
      viewBox="0 0 500 110"
      fill="#e4e4e4"
      fontWeight="700"
      className="pointer-events-none absolute left-[1797px] top-[2008px] overflow-visible mix-blend-multiply font-['DejaVu_Sans']"
    >
      <text x="5" y="103" fontSize="122" textLength="312" lengthAdjust="spacingAndGlyphs">
        {"\u200dسات"}
      </text>
      <text x="308" y="103" fontSize="132" textLength="82" lengthAdjust="spacingAndGlyphs">
        5
      </text>
      <text x="376" y="103" fontSize="122" textLength="119" lengthAdjust="spacingAndGlyphs">
        {"خ\u200d"}
      </text>
    </svg>
  );
}

export default function App() {
  return (
    <div className="relative flex h-[2157px] w-[4096px] overflow-hidden bg-[#fefefe] font-['Noto_Sans','Open_Sans',sans-serif]">
      <div className="w-[23px] shrink-0 bg-black" />
      <div className="w-[4073px]">
        <nav className="flex h-[90px] pl-[54px] text-[41px] leading-[66px] tracking-[-0.03em] whitespace-nowrap text-[#444]">
          {tabs.map((t) => (
            <div key={t.label} className={clsx("shrink-0", t.w)}>
              {t.active ? (
                <div className="h-[73px] w-[122px] border-b-[10px] border-[#338459] text-center font-semibold leading-[66px] tracking-[-0.025em] text-[#3a3a3a]">{t.label}</div>
              ) : (
                t.label
              )}
            </div>
          ))}
          <div className="ml-auto mr-[47px] flex font-semibold text-[#2c7350]">
            <Glyph box={[3890, 14, 38, 38]} className="mr-[15px] mt-3.5">
              <path d="M3899 26h-7v24h33V38" stroke="#5b8f76" />
              <path d="M3901 41c1-10 6-14 14-14v-9l11 13-11 12v-8c-6 0-10 1-14 6z" stroke="#5b8f76" />
            </Glyph>
            Share
          </div>
        </nav>

        <div className="flex h-[300px] border-b-2 border-[#f1f1ef]">
          <ClipboardGroup />
          <FontGroup />
          <AlignmentGroup />
          <NumberGroup />
          <StylesGroup />
          <CellsGroup />
          <EditingGroup />
          <AddInGroups />
          <svg width="30" height="17" viewBox="0 0 30 17" fill="none" stroke="#444" strokeWidth="3" className="ml-[27px] mt-[267px]">
            <path d="M2 15L15 2l13 13" />
          </svg>
        </div>

        <FormulaBar />
        <div className="font-['Open_Sans','Noto_Sans',sans-serif]">
          <ColumnHeaders />
          <Sheet />
        </div>
        <SheetTabs />
        <StatusBar />
      </div>

      <Watermark />
    </div>
  );
}
